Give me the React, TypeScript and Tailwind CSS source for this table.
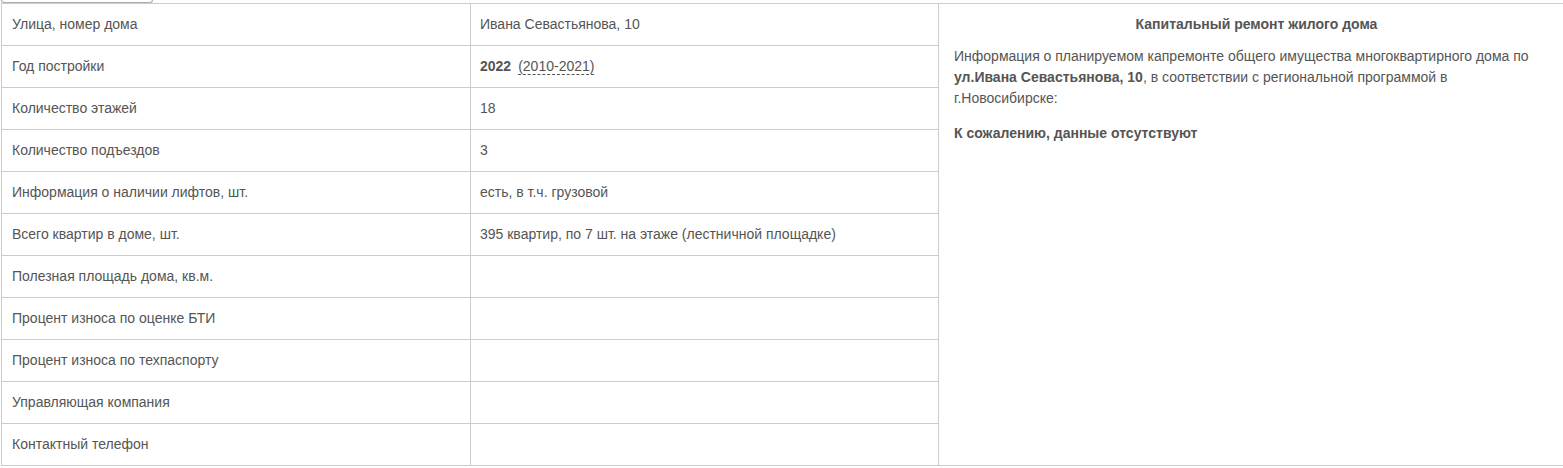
import React from "react";

const rows: [string, React.ReactNode][] = [
  ["Улица, номер дома", "Ивана Севастьянова, 10"],
  [
    "Год постройки",
    <span>
      <b className="font-bold">2022</b>
      <span className="ml-[7px] border-b border-dashed border-[#555]">(2010-2021)</span>
    </span>,
  ],
  ["Количество этажей", "18"],
  ["Количество подъездов", "3"],
  ["Информация о наличии лифтов, шт.", "есть, в т.ч. грузовой"],
  ["Всего квартир в доме, шт.", "395 квартир, по 7 шт. на этаже (лестничной площадке)"],
  ["Полезная площадь дома, кв.м.", ""],
  ["Процент износа по оценке БТИ", ""],
  ["Процент износа по техпаспорту", ""],
  ["Управляющая компания", ""],
  ["Контактный телефон", ""],
];

export default function App() {
  return (
    <div
      className="w-[1563px] h-[468px] bg-white text-[#555] text-[14px] overflow-hidden"
      style={{ fontFamily: '"Liberation Sans", Arial, sans-serif' }}
    >
      <div className="h-[3px] pl-[1px]">
        <div className="w-[152px] h-[3px] border border-t-0 border-[#adadad] rounded-b-[3px]" />
      </div>
      <div className="flex pl-[1px]">
        <table className="w-[938px] border-collapse shrink-0">
          <tbody>
            {rows.map(([k, v], i) => (
              <tr key={i} className="h-[42px]">
                <td className="w-[469px] border border-[#ccc] pl-[10px] pr-[10px] pb-[2px] align-middle leading-[20px]">{k}</td>
                <td className="border border-[#ccc] pl-[9px] pr-[10px] pb-[2px] align-middle leading-[20px]">{v}</td>
              </tr>
            ))}
          </tbody>
        </table>
        <div className="flex-1 border-y border-[#ccc] h-[463px] pl-[15px] pr-[10px] pt-[12px]">
          <div className="text-center font-bold leading-[17px] pl-[6px]">Капитальный ремонт жилого дома</div>
          <p className="mt-[13px] leading-[21px]">
            Информация о планируемом капремонте общего имущества многоквартирного дома по{" "}
            <b className="font-bold">ул.Ивана Севастьянова, 10</b>, в соответствии с региональной программой в
            <br />
            г.Новосибирске:
          </p>
          <p className="mt-[14px] font-bold leading-[20px]">К сожалению, данные отсутствуют</p>
        </div>
      </div>
    </div>
  );
}
